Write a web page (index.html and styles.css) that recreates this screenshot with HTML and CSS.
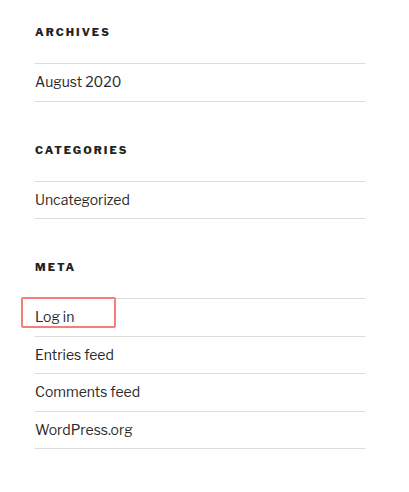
FILE: index.html
```html
<!DOCTYPE html>
<html>
<head>
<meta charset="utf-8">
<link rel="stylesheet" href="styles.css">
</head>
<body>
<aside class="sidebar">
  <section class="widget">
    <h2 class="widget-title">Archives</h2>
    <ul class="widget-list">
      <li><a href="#">August 2020</a></li>
    </ul>
  </section>
  <section class="widget">
    <h2 class="widget-title">Categories</h2>
    <ul class="widget-list">
      <li><a href="#">Uncategorized</a></li>
    </ul>
  </section>
  <section class="widget">
    <h2 class="widget-title">Meta</h2>
    <ul class="widget-list">
      <li class="highlighted"><a href="#">Log in</a><span class="highlight-box"></span></li>
      <li><a href="#">Entries feed</a></li>
      <li><a href="#">Comments feed</a></li>
      <li><a href="#">WordPress.org</a></li>
    </ul>
  </section>
</aside>
</body>
</html>
```

FILE: styles.css
```css
html, body {
  margin: 0;
  padding: 0;
  background: #fff;
}

body {
  font-family: "Libre Franklin", Lato, "Liberation Sans", sans-serif;
  color: #333;
}

.sidebar {
  width: 330px;
  padding: 22px 0 0 35px;
  display: flex;
  flex-direction: column;
  gap: 38px;
}

.widget-title {
  margin: 0 0 21px 0;
  font-size: 11px;
  line-height: 20px;
  font-weight: 800;
  letter-spacing: 0.185em;
  text-transform: uppercase;
  color: #222;
}

.widget-list {
  list-style: none;
  margin: 0;
  padding: 0;
  border-bottom: 1px solid #ddd;
}

.widget-list li {
  position: relative;
  border-top: 1px solid #ddd;
  padding: 7px 0;
  font-size: 14px;
  line-height: 22.5px;
}

.widget-list a {
  color: #2a2a2a;
  text-decoration: none;
}

.highlight-box {
  position: absolute;
  left: -14px;
  top: -2px;
  width: 91px;
  height: 27px;
  border: 2px solid #f77c7c;
  border-radius: 2px;
}
```
